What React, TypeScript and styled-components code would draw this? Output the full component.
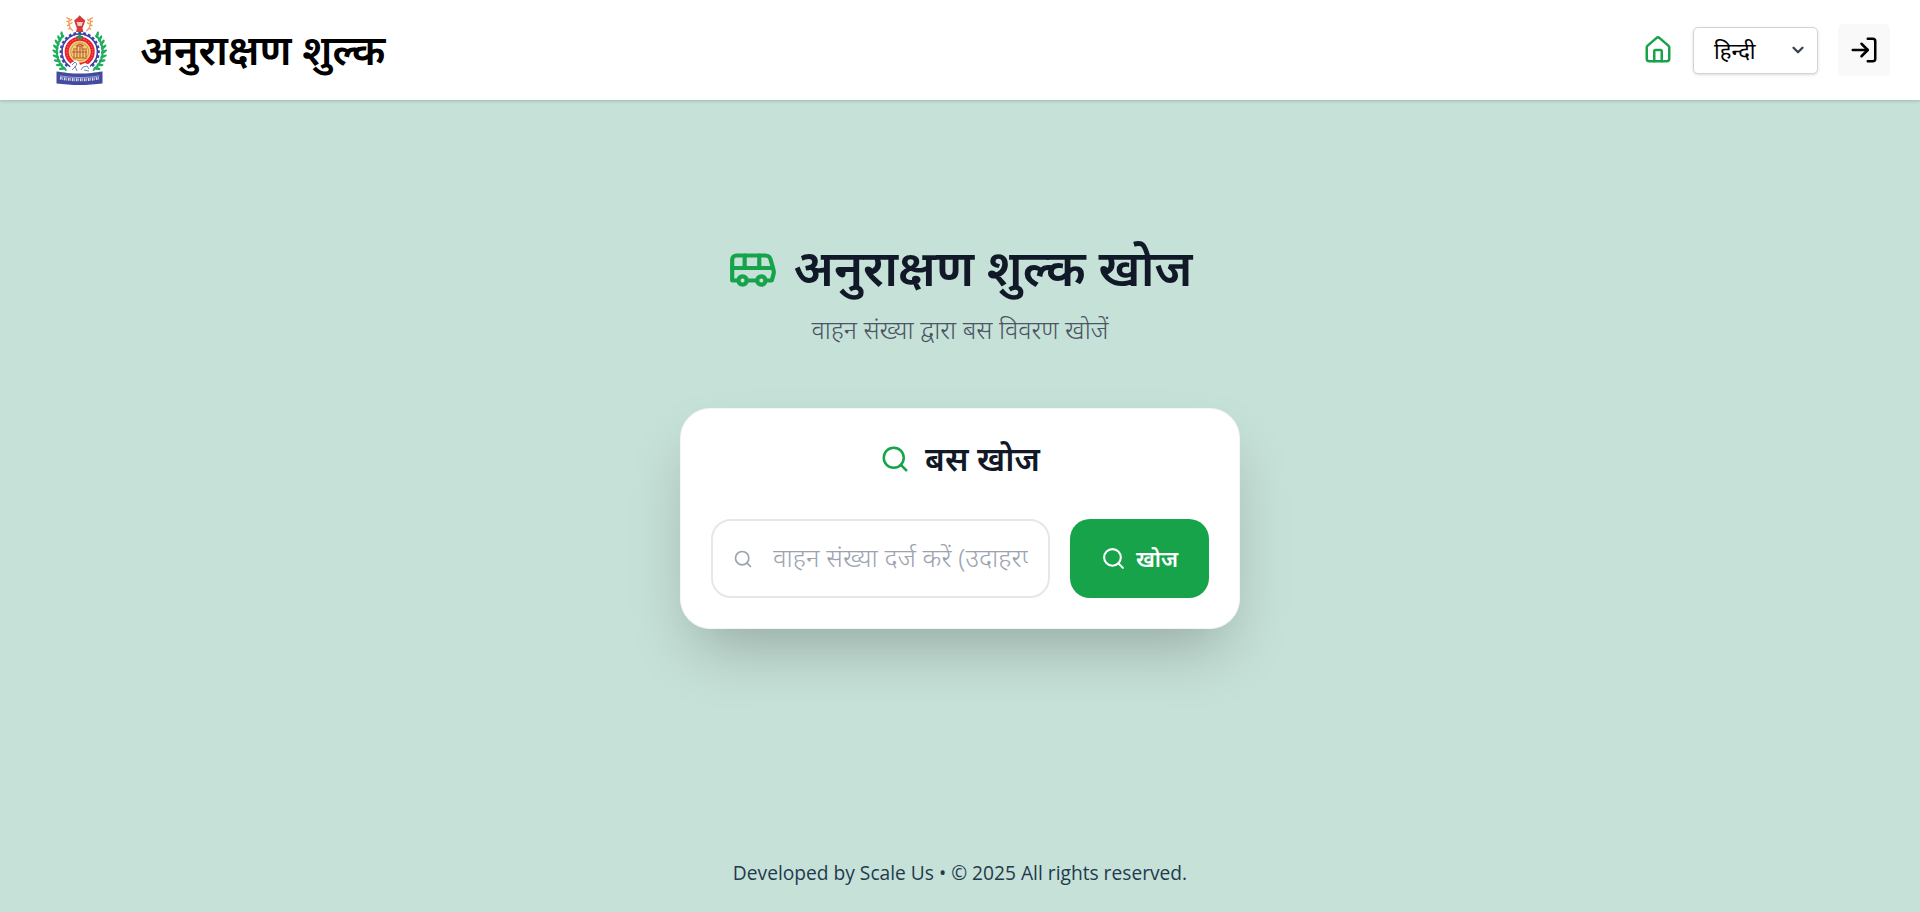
import React from "react";
import styled, { createGlobalStyle } from "styled-components";
import { Bus, ChevronDown, House, LogIn, Search } from "lucide-react";

const GlobalStyle = createGlobalStyle`
  *, *::before, *::after { box-sizing: border-box; }
  body {
    margin: 0;
    background: #c6e1d8;
    font-family: "Noto Sans", "Nirmala UI", sans-serif;
  }
`;

const Page = styled.div`
  display: flex;
  flex-direction: column;
  height: 100vh;
  overflow: hidden;
`;

const Header = styled.header`
  display: flex;
  align-items: center;
  justify-content: space-between;
  height: 100px;
  padding: 0 30px 0 40px;
  background: #fff;
  box-shadow: 0 1px 4px rgba(0, 0, 0, 0.12), 0 1px 2px rgba(0, 0, 0, 0.08);
`;

const Brand = styled.div`
  display: flex;
  align-items: center;
  gap: 20px;
`;

const BrandName = styled.h1`
  margin: 0 0 2px;
  font-size: 41.4px;
  line-height: 50px;
  font-weight: 600;
  color: #000;
  white-space: nowrap;
`;

const Actions = styled.nav`
  display: flex;
  align-items: center;
  gap: 20px;
`;

const HomeLink = styled.a`
  display: flex;
  color: #16a34a;
`;

const LanguageSelect = styled.button`
  display: flex;
  align-items: center;
  justify-content: space-between;
  width: 125px;
  height: 47px;
  padding: 0 10px 0 20px;
  border: 1px solid #d1d5db;
  border-radius: 5px;
  background: #fff;
  box-shadow: 0 1px 3px rgba(0, 0, 0, 0.14);
  font: 400 22px/28px "Noto Sans", sans-serif;
  color: #000;
`;

const LoginButton = styled.button`
  display: grid;
  place-items: center;
  width: 52px;
  height: 52px;
  padding: 0;
  border: 0;
  border-radius: 5px;
  background: #f9f9f9;
  color: #000;
`;

const Main = styled.main`
  flex: 1;
  display: flex;
  flex-direction: column;
  align-items: center;
  padding-top: 136px;
`;

const HeroTitle = styled.h2`
  display: flex;
  align-items: center;
  gap: 16px;
  margin: 0;
  height: 62px;
  font-size: 49.3px;
  line-height: 62px;
  font-weight: 600;
  color: #111827;
  white-space: nowrap;
`;

const BusIcon = styled(Bus)`
  margin-top: 2px;
  color: #16a34a;
`;

const HeroText = styled.p`
  margin: 14px 0 0;
  height: 35px;
  font-size: 25.2px;
  line-height: 35px;
  font-weight: 300;
  color: #4b5563;
  white-space: nowrap;
`;

const Card = styled.section`
  width: 560px;
  height: 221px;
  margin-top: 61px;
  padding: 30px;
  border: 1px solid #f3f4f6;
  border-radius: 30px;
  background: #fff;
  box-shadow: 0 31px 62px -15px rgba(0, 0, 0, 0.25);
`;

const CardTitle = styled.h3`
  display: flex;
  align-items: center;
  justify-content: center;
  gap: 15px;
  height: 40px;
  margin: 0 0 40px;
  font-size: 33px;
  line-height: 38px;
  font-weight: 600;
  color: #111827;
`;

const TitleSearchIcon = styled(Search)`
  color: #16a34a;
`;

const SearchForm = styled.form`
  display: flex;
  gap: 20px;
  height: 79px;
`;

const Field = styled.label`
  display: flex;
  align-items: center;
  flex: 1;
  min-width: 0;
  padding: 0 20px;
  gap: 20px;
  border: 2px solid #e5e7eb;
  border-radius: 20px;
  color: #9ca3af;
`;

const FieldInput = styled.input`
  flex: 1;
  min-width: 0;
  width: 0;
  height: 50px;
  margin-top: -3px;
  padding: 0;
  border: 0;
  outline: 0;
  background: transparent;
  font: 300 25.9px/35px "Noto Sans", sans-serif;
  &::placeholder { color: #9ca3af; opacity: 1; }
`;

const SubmitButton = styled.button`
  display: flex;
  align-items: center;
  justify-content: center;
  gap: 10px;
  width: 139px;
  padding: 0;
  border: 0;
  border-radius: 20px;
  background: #16a34a;
  color: #fff;
  font: 600 22.2px/30px "Noto Sans", sans-serif;
`;

const Footer = styled.footer`
  height: 78px;
  padding-top: 24px;
  text-align: center;
  font-family: "Open Sans", sans-serif;
  font-size: 19.2px;
  line-height: 30px;
  color: #1f3a4d;
`;

const teeth = Array.from({ length: 19 }, (_, i) => -45 + i * 15);
const leafAngles = [-42, -31, -20, -9, 2, 13, 24, 35, 46];

const Wreath = () => (
  <g fill="#1fae5c">
    {leafAngles.map((deg) => {
      const a = (deg * Math.PI) / 180;
      const x = 39.7 - Math.cos(a) * 23.5;
      const y = 51.5 + Math.sin(a) * 23.5;
      return (
        <g key={deg}>
          <ellipse cx={x - 1.2} cy={y} rx="3.3" ry="1.3" transform={`rotate(${35 - deg} ${x} ${y})`} />
          <ellipse cx={x + 1} cy={y - 1} rx="2.8" ry="1.2" transform={`rotate(${100 - deg} ${x} ${y})`} />
        </g>
      );
    })}
  </g>
);

const Emblem = () => (
  <svg width="80" height="100" viewBox="0 0 80 100" fill="none">
    <Wreath />
    <g transform="matrix(-1 0 0 1 79.4 0)"><Wreath /></g>
    <circle cx="39.7" cy="51.7" r="17.8" fill="#fff" stroke="#3d45a6" strokeWidth="1.5" />
    {teeth.map((deg) => (
      <rect key={deg} x="56.8" y="50.3" width="3" height="2.8" transform={`rotate(${-deg} 39.7 51.7)`} fill="#3d45a6" />
    ))}
    <circle cx="39.7" cy="51.7" r="13" fill="#f3cf78" stroke="#e8202d" strokeWidth="4" />
    <circle cx="39.7" cy="51.7" r="13" stroke="#fff" strokeOpacity="0.4" strokeWidth="1" strokeDasharray="1.3 1.5" />
    <circle cx="39.7" cy="51.7" r="9" stroke="#c77b35" strokeWidth="0.7" />
    <path d="M33 49h4v-3h5v3h5M32 52h15M34 50v8m3-9v9m3-12v12m3-9v9m3-8v7M33 58h14M36 46l4-2 4 2" stroke="#b65a32" strokeWidth="1.1" />
    <path d="M31 63l5-3 3 2 1 3 5-2 5 2v7H30v-4z" fill="#fff" />
    <path d="M32 65l3-3 2 2-2 3-3 3m9 0 2-3 4-1 2 3m-5 1 5 1m-14-5 2 5" stroke="#5d62a8" strokeWidth="0.8" />
    <path d="M39.7 33.8l1.5 2 2.2.5-1.5 2.2h-4.4L36 36.3l2.2-.5z" fill="#1b9b51" />
    <path d="M39.7 15.2l2 2.3 3.6 3-1.2 3.4-1.6 4.3.9 3.7h-7.400l.9-3.700-1.600-4.300-1.200-3.400 3.600-3z" fill="#d43a3d" />
    <path d="M36.5 22h6.5l-1.400 4h-3.700z" fill="#f5c9bf" />
    <path d="M33 31c-3-2-5-5-3.6-13M46.4 31c3-2 5-5 3.6-13" stroke="#f3a15a" strokeWidth="1.3" />
    <path d="M29 19l-2.5-1.5M29 22l-2.5-.8M29.3 25l-2.4.6M30.4 28l-2 1.6M30 21l2-2M30 24l2.5-1.5M50.4 19l2.5-1.5M50.4 22l2.5-.8M50.1 25l2.4.6M49 28l2 1.6M49.4 21l-2-2M49.4 24l-2.5-1.5" stroke="#f0934a" strokeWidth="1.3" />
    <path d="M16.5 71.5c4 .3 7.5 1 11 1.4 8 .8 16 .8 24 0 3.5-.4 7-1.1 11-1.4v12c-4 .2-7 .6-11 .9-8 .7-16 .7-24 0-4-.3-7-.7-11-.9z" fill="#434b9e" />
    <path d="M20 78c13 2.500 26.500 2.500 39.500 0" stroke="#d8daf0" strokeWidth="3" strokeDasharray="1.600 .8 .7 .9" />
    <path d="M20 75.800c13 2.300 26.500 2.300 39.500 0" stroke="#c3c6e6" strokeWidth="0.700" />
  </svg>
);

export default function App() {
  return (
    <Page>
      <GlobalStyle />
      <Header>
        <Brand>
          <Emblem />
          <BrandName>अनुराक्षण शुल्क</BrandName>
        </Brand>
        <Actions>
          <HomeLink><House size={30} /></HomeLink>
          <LanguageSelect>हिन्दी<ChevronDown size={18} strokeWidth={3} color="#374151" /></LanguageSelect>
          <LoginButton><LogIn size={30} /></LoginButton>
        </Actions>
      </Header>
      <Main>
        <HeroTitle><BusIcon size={50} />अनुराक्षण शुल्क खोज</HeroTitle>
        <HeroText>वाहन संख्या द्वारा बस विवरण खोजें</HeroText>
        <Card>
          <CardTitle><TitleSearchIcon size={30} />बस खोज</CardTitle>
          <SearchForm>
            <Field><Search size={20} /><FieldInput placeholder="वाहन संख्या दर्ज करें (उदाहरण: CG04AB1234)" /></Field>
            <SubmitButton type="button"><Search size={25} />खोज</SubmitButton>
          </SearchForm>
        </Card>
      </Main>
      <Footer>Developed by Scale Us • © 2025 All rights reserved.</Footer>
    </Page>
  );
}
